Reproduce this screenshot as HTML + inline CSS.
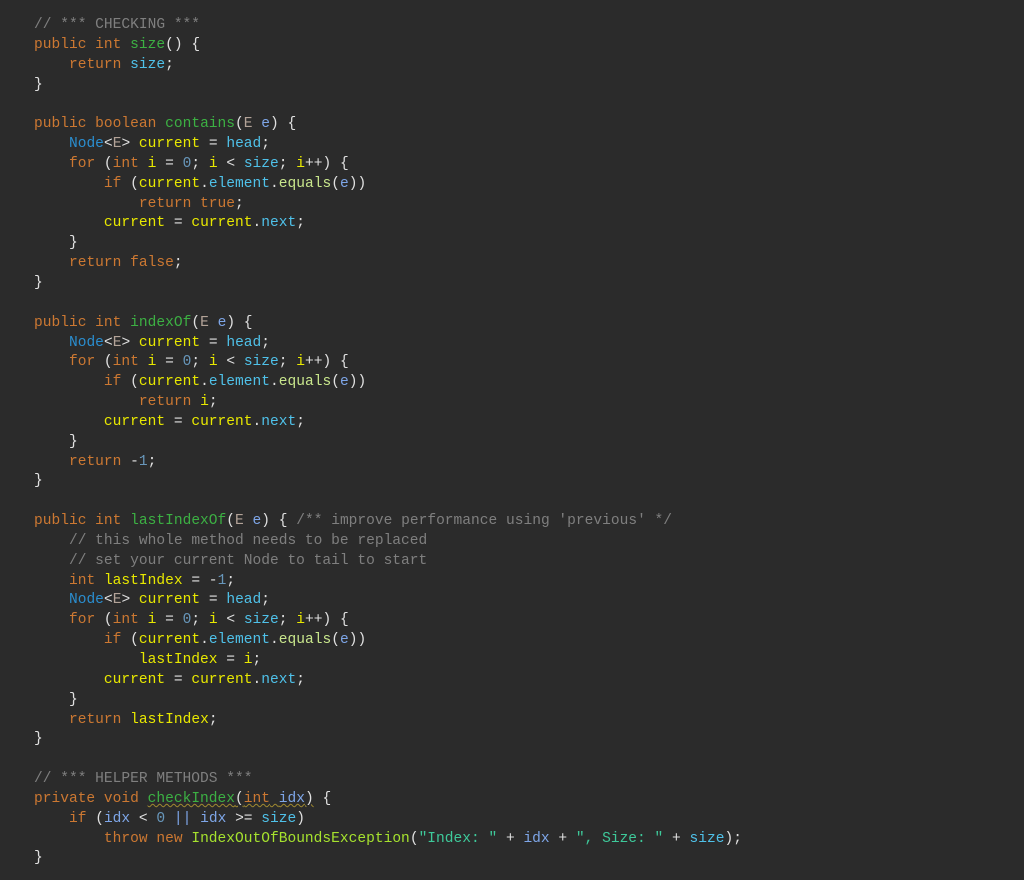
<!DOCTYPE html>
<html><head><meta charset="utf-8"><style>
body{margin:0;background:#2b2b2b;width:1024px;height:880px;overflow:hidden}
pre{margin:0;position:absolute;left:34px;top:16px;font-family:"Liberation Mono",monospace;font-size:14.57px;line-height:19.85px;color:#e0e0e0}
.k{color:#cc7832}.m{color:#3cb043}.f{color:#4fc1e9}.t{color:#2a8ed0}.g{color:#b3a398}.v{color:#e8e800}.p{color:#7ea6e8}.c{color:#7f7f7f}.n{color:#6897bb}.s{color:#3ec99a}.q{color:#c8e68c}.y{color:#a6e22e}
.u{text-decoration:underline wavy #a08a30;text-decoration-thickness:1px}
</style></head><body><pre><span class="c">// *** CHECKING ***</span>
<span class="k">public int</span> <span class="m">size</span>() {
    <span class="k">return</span> <span class="f">size</span>;
}

<span class="k">public boolean</span> <span class="m">contains</span>(<span class="g">E</span> <span class="p">e</span>) {
    <span class="t">Node</span>&lt;<span class="g">E</span>&gt; <span class="v">current</span> = <span class="f">head</span>;
    <span class="k">for</span> (<span class="k">int</span> <span class="v">i</span> = <span class="n">0</span>; <span class="v">i</span> &lt; <span class="f">size</span>; <span class="v">i</span>++) {
        <span class="k">if</span> (<span class="v">current</span>.<span class="f">element</span>.<span class="q">equals</span>(<span class="p">e</span>))
            <span class="k">return true</span>;
        <span class="v">current</span> = <span class="v">current</span>.<span class="f">next</span>;
    }
    <span class="k">return false</span>;
}

<span class="k">public int</span> <span class="m">indexOf</span>(<span class="g">E</span> <span class="p">e</span>) {
    <span class="t">Node</span>&lt;<span class="g">E</span>&gt; <span class="v">current</span> = <span class="f">head</span>;
    <span class="k">for</span> (<span class="k">int</span> <span class="v">i</span> = <span class="n">0</span>; <span class="v">i</span> &lt; <span class="f">size</span>; <span class="v">i</span>++) {
        <span class="k">if</span> (<span class="v">current</span>.<span class="f">element</span>.<span class="q">equals</span>(<span class="p">e</span>))
            <span class="k">return</span> <span class="v">i</span>;
        <span class="v">current</span> = <span class="v">current</span>.<span class="f">next</span>;
    }
    <span class="k">return</span> -<span class="n">1</span>;
}

<span class="k">public int</span> <span class="m">lastIndexOf</span>(<span class="g">E</span> <span class="p">e</span>) { <span class="c">/** improve performance using 'previous' */</span>
    <span class="c">// this whole method needs to be replaced</span>
    <span class="c">// set your current Node to tail to start</span>
    <span class="k">int</span> <span class="v">lastIndex</span> = -<span class="n">1</span>;
    <span class="t">Node</span>&lt;<span class="g">E</span>&gt; <span class="v">current</span> = <span class="f">head</span>;
    <span class="k">for</span> (<span class="k">int</span> <span class="v">i</span> = <span class="n">0</span>; <span class="v">i</span> &lt; <span class="f">size</span>; <span class="v">i</span>++) {
        <span class="k">if</span> (<span class="v">current</span>.<span class="f">element</span>.<span class="q">equals</span>(<span class="p">e</span>))
            <span class="v">lastIndex</span> = <span class="v">i</span>;
        <span class="v">current</span> = <span class="v">current</span>.<span class="f">next</span>;
    }
    <span class="k">return</span> <span class="v">lastIndex</span>;
}

<span class="c">// *** HELPER METHODS ***</span>
<span class="k">private void</span> <span class="u"><span class="m">checkIndex</span>(<span class="k">int</span> <span class="p">idx</span>)</span> {
    <span class="k">if</span> (<span class="p">idx</span> &lt; <span class="n">0</span> <span style="color:#7ea6e8">||</span> <span class="p">idx</span> &gt;= <span class="f">size</span>)
        <span class="k">throw new</span> <span class="y">IndexOutOfBoundsException</span>(<span class="s">"Index: "</span> + <span class="p">idx</span> + <span class="s">", Size: "</span> + <span class="f">size</span>);
}</pre></body></html>
